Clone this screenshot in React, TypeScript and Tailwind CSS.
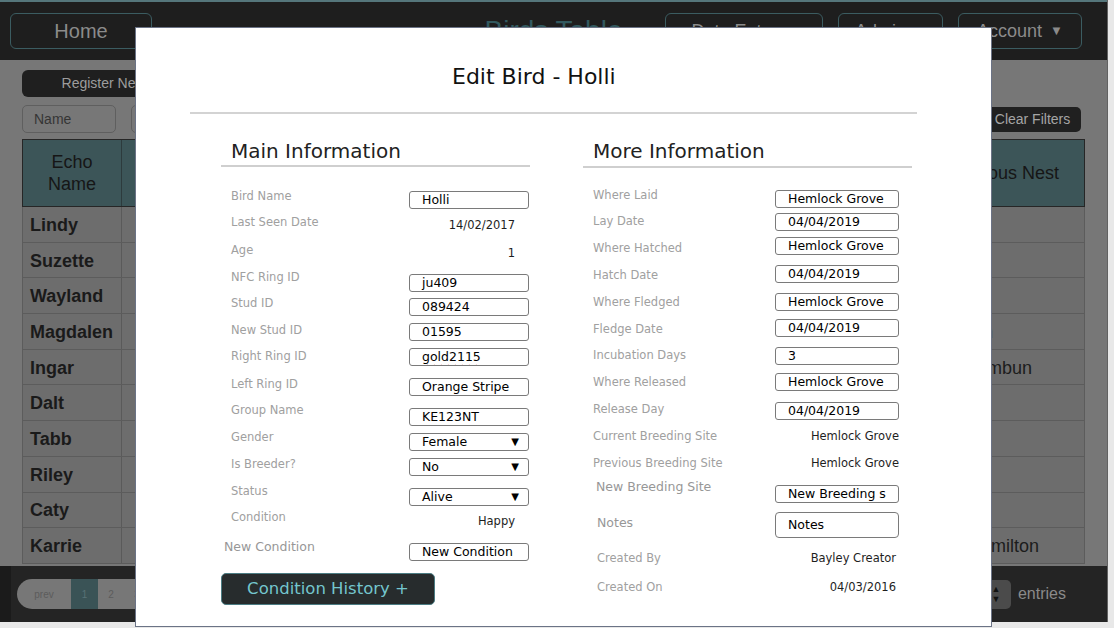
import React from 'react'

type Bird = { name: string; nest: string }

const birds: Bird[] = [
  { name: 'Lindy', nest: '' },
  { name: 'Suzette', nest: '' },
  { name: 'Wayland', nest: '' },
  { name: 'Magdalen', nest: 'Inn' },
  { name: 'Ingar', nest: 'Tombun' },
  { name: 'Dalt', nest: '' },
  { name: 'Tabb', nest: '' },
  { name: 'Riley', nest: '' },
  { name: 'Caty', nest: '' },
  { name: 'Karrie', nest: 'Hamilton' },
]

const columns = ['Echo Name', 'Band', 'Sex', 'Age', 'Status', 'Breeding Site', 'Previous Nest']

type Field = {
  label: string
  h: string
  kind: 'input' | 'select' | 'text' | 'area'
  value: string
  lm?: string
  vm?: string
  lp?: string
  tp?: string
  big?: boolean
  spell?: boolean
}

const mainFields: Field[] = [
  { label: 'Bird Name', h: 'h-[26px]', vm: 'mt-[3px]', kind: 'input', value: 'Holli' },
  { label: 'Last Seen Date', h: 'h-[28px]', vm: 'mt-[3px]', kind: 'text', value: '14/02/2017' },
  { label: 'Age', h: 'h-[27px]', vm: 'mt-[3px]', kind: 'text', value: '1' },
  { label: 'NFC Ring ID', h: 'h-[26px]', vm: 'mt-[5px]', kind: 'input', value: 'ju409' },
  { label: 'Stud ID', h: 'h-[27px]', vm: 'mt-[3px]', kind: 'input', value: '089424' },
  { label: 'New Stud ID', h: 'h-[26px]', vm: 'mt-[1px]', kind: 'input', value: '01595' },
  { label: 'Right Ring ID', h: 'h-[28px]', kind: 'input', value: 'gold2115', spell: true },
  { label: 'Left Ring ID', h: 'h-[26px]', vm: 'mt-[2px]', kind: 'input', value: 'Orange Stripe' },
  { label: 'Group Name', h: 'h-[27px]', vm: 'mt-[6px]', kind: 'input', value: 'KE123NT' },
  { label: 'Gender', h: 'h-[27px]', vm: 'mt-[4px]', kind: 'select', value: 'Female' },
  { label: 'Is Breeder?', h: 'h-[27px]', vm: 'mt-[2px]', kind: 'select', value: 'No' },
  { label: 'Status', h: 'h-[26px]', vm: 'mt-[5px]', kind: 'select', value: 'Alive' },
  { label: 'Condition', h: 'h-[30px]', vm: 'mt-[4px]', kind: 'text', value: 'Happy' },
  { label: 'New Condition', h: 'h-[34px]', vm: 'mt-[4px]', kind: 'input', value: 'New Condition', big: true, lp: 'pl-[3px]' },
]

const moreFields: Field[] = [
  { label: 'Where Laid', h: 'h-[26px]', vm: 'mt-[3px]', kind: 'input', value: 'Hemlock Grove' },
  { label: 'Lay Date', h: 'h-[24px]', kind: 'input', value: '04/04/2019' },
  { label: 'Where Hatched', h: 'h-[28px]', lm: 'mt-[3px]', kind: 'input', value: 'Hemlock Grove' },
  { label: 'Hatch Date', h: 'h-[28px]', lm: 'mt-[2px]', kind: 'input', value: '04/04/2019' },
  { label: 'Where Fledged', h: 'h-[26px]', lm: 'mt-[1px]', kind: 'input', value: 'Hemlock Grove' },
  { label: 'Fledge Date', h: 'h-[28px]', lm: 'mt-[2px]', kind: 'input', value: '04/04/2019' },
  { label: 'Incubation Days', h: 'h-[26px]', kind: 'input', value: '3' },
  { label: 'Where Released', h: 'h-[28px]', lm: 'mt-[1px]', kind: 'input', value: 'Hemlock Grove' },
  { label: 'Release Day', h: 'h-[27px]', vm: 'mt-[1px]', kind: 'input', value: '04/04/2019' },
  { label: 'Current Breeding Site', h: 'h-[27px]', kind: 'text', value: 'Hemlock Grove', tp: 'pr-0' },
  { label: 'Previous Breeding Site', h: 'h-[24px]', kind: 'text', value: 'Hemlock Grove', tp: 'pr-0' },
  { label: 'New Breeding Site', h: 'h-[33px]', vm: 'mt-[6px]', kind: 'input', value: 'New Breeding s', big: true, lp: 'pl-[13px]' },
  { label: 'Notes', h: 'h-[38px]', lm: 'mt-[3px]', kind: 'area', value: 'Notes', big: true, lp: 'pl-[14px]' },
  { label: 'Created By', h: 'h-[29px]', kind: 'text', value: 'Bayley Creator', lp: 'pl-[14px]', tp: 'pr-[3px]' },
  { label: 'Created On', h: 'h-[16px]', kind: 'text', value: '04/03/2016', lp: 'pl-[14px]', tp: 'pr-[3px]' },
]

function FieldValue({ f }: { f: Field }) {
  if (f.kind === 'text') {
    return (
      <div className={`text-right text-[11.5px] leading-[16px] text-[#1e1e1e] ${f.tp ?? 'pr-[14px]'}`}>
        {f.value}
      </div>
    )
  }
  if (f.kind === 'select') {
    return (
      <div className="flex h-[18px] items-center justify-between rounded-[3px] border border-[#7a7a7a] pl-[12px] pr-[9px] text-[12.5px] leading-[16px] text-black">
        <span>{f.value}</span>
        <span className="text-[10px]">▼</span>
      </div>
    )
  }
  if (f.kind === 'area') {
    return (
      <div className="flex h-[26px] items-center rounded-[4px] border border-[#7a7a7a] pl-[12px] text-[12.5px] text-black">
        {f.value}
      </div>
    )
  }
  return (
    <div className="h-[18px] overflow-hidden whitespace-nowrap rounded-[3px] border border-[#7a7a7a] pl-[12px] pr-[3px] text-[12.5px] leading-[16px] text-black">
      <span className={f.spell ? 'underline decoration-[#e03c3c] decoration-wavy decoration-1 underline-offset-[3px]' : ''}>
        {f.value}
      </span>
    </div>
  )
}

function FieldRow({ f, labelW, valueW }: { f: Field; labelW: string; valueW: string }) {
  return (
    <div className={`flex items-start ${f.h}`}>
      <div
        className={`${labelW} shrink-0 ${f.lm ?? ''} ${f.lp ?? 'pl-[10px]'} ${
          f.big ? 'text-[12.5px] text-[#979797]' : 'text-[11.5px] text-[#a0a0a0]'
        } leading-[16px]`}
      >
        {f.label}
      </div>
      <div className={`${valueW} ${f.vm ?? ''}`}>
        <FieldValue f={f} />
      </div>
    </div>
  )
}

function NavButton({ children, width }: { children: React.ReactNode; width: string }) {
  return (
    <button className={`flex h-[36px] ${width} items-center justify-center gap-[8px] rounded-[6px] border border-[#3b5c61] text-[18px] text-[#8b8b8b]`}>
      {children}
    </button>
  )
}

export default function App() {
  return (
    <div className="relative h-[628px] w-[1114px] overflow-hidden bg-[#e8e8e8] font-['Liberation_Sans',Arial,sans-serif]">
      <div className="flex h-[622px] w-[1108px] flex-col border-r border-[#626262] bg-[#777777]">
        {/* Top bar */}
        <header className="grid h-[60px] shrink-0 grid-cols-[1fr_auto_1fr] items-center border-t-2 border-[#55767b] bg-[#1e1e1e] px-[10px]">
          <div>
            <button className="flex h-[36px] w-[142px] items-center justify-center rounded-[6px] border border-[#3b5c61] text-[20px] text-[#8b8b8b]">
              Home
            </button>
          </div>
          <h1 className="text-[28px] leading-[32px] text-[#32595f]">Birds Table</h1>
          <nav className="flex justify-end gap-[15px] pr-[15px]">
            <NavButton width="w-[158px]">
              Data Entry <span className="text-[12px]">▼</span>
            </NavButton>
            <NavButton width="w-[105px]">
              Admin <span className="text-[12px]">▼</span>
            </NavButton>
            <NavButton width="w-[124px]">
              Account <span className="text-[13px]">▼</span>
            </NavButton>
          </nav>
        </header>

        {/* Page content */}
        <main className="flex flex-1 flex-col px-[22px] pt-[10px]">
          <div>
            <button className="h-[27px] w-[192px] rounded-[6px] bg-[#1f1f1f] text-[14px] text-[#9d9d9d]">
              Register New Bird
            </button>
          </div>

          <div className="mt-[8px] flex h-[28px] items-center justify-between pr-[4px]">
            <div className="flex gap-[15px]">
              <div className="flex h-[28px] w-[94px] items-center rounded-[5px] border border-[#5f5f5f] pl-[11px] text-[14px] text-[#353535]">
                Name
              </div>
              <div className="flex h-[28px] w-[94px] items-center rounded-[5px] border border-[#5f5f5f] pl-[11px] text-[14px] text-[#353535]">
                Band
              </div>
            </div>
            <button className="h-[25px] w-[97px] rounded-[5px] bg-[#202020] text-[14px] text-[#a5a5a5]">Clear Filters</button>
          </div>

          {/* Table */}
          <div className="mt-[6px]">
            <div className="grid h-[68px] grid-cols-[99px_150px_140px_150px_150px_1fr_162px] border border-[#262626] bg-[#3c5558]">
              {columns.map((c, i) => (
                <div
                  key={c}
                  className={`flex items-center justify-center px-[10px] text-center text-[18px] leading-[22px] text-[#161616] ${
                    i < columns.length - 1 ? 'border-r border-[#2d3b3d]' : ''
                  }`}
                >
                  {c === 'Echo Name' ? (
                    <span>
                      Echo
                      <br />
                      Name
                    </span>
                  ) : (
                    c
                  )}
                </div>
              ))}
            </div>
            {birds.map((b) => (
              <div
                key={b.name}
                className="grid h-[35.7px] grid-cols-[99px_150px_140px_150px_150px_1fr_162px] border-x border-b border-[#5c5c5c] bg-[#6d6d6d]"
              >
                <div className="flex items-center border-r border-[#5a5a5a] pl-[7px] pt-[2px] text-[18px] font-bold text-[#1a1a1a]">{b.name}</div>
                <div className="border-r border-[#636363]" />
                <div className="border-r border-[#636363]" />
                <div className="border-r border-[#636363]" />
                <div className="border-r border-[#636363]" />
                <div className="border-r border-[#636363]" />
                <div className="flex items-center pl-[46px] pt-[2px] text-[18px] text-[#1c1c1c]">{b.nest}</div>
              </div>
            ))}
          </div>
        </main>

        {/* Footer */}
        <footer className="flex h-[56px] shrink-0 items-center justify-between border-l-[11px] border-[#1b1b1b] bg-[#242424] pl-[6px] pr-[41px]">
          <div className="flex h-[30px] overflow-hidden rounded-l-full bg-[#777777] text-[10px] text-[#5c5c5c]">
            <span className="flex w-[54px] items-center justify-center">prev</span>
            <span className="flex w-[27px] items-center justify-center bg-[#3a5356] text-[#587175]">1</span>
            <span className="flex w-[26px] items-center justify-center">2</span>
            <span className="flex w-[26px] items-center justify-center">3</span>
            <span className="flex w-[26px] items-center justify-center">next</span>
          </div>
          <div className="flex items-center gap-[7px]">
            <div className="flex h-[29px] w-[30px] flex-col items-center justify-center rounded-[5px] bg-[#4b4b4b] text-[9px] leading-[10px] text-[#111111]">
              <span>▲</span>
              <span>▼</span>
            </div>
            <span className="text-[16px] text-[#8a8a8a]">entries</span>
          </div>
        </footer>
      </div>

      {/* Edit modal */}
      <div className="absolute left-[135px] top-[27px] h-[600px] w-[857px] border border-[#6b7386] bg-white font-['DejaVu_Sans',Verdana,sans-serif]">
        <h2 className="pl-[316px] pt-[35px] text-[22px] leading-[28px] text-[#111111]">Edit Bird - Holli</h2>
        <div className="ml-[54px] mt-[21px] h-[2px] w-[727px] bg-[#d3d3d3]" />

        <div className="flex gap-[53px] pl-[85px] pt-[25px]">
          {/* Main information */}
          <section className="w-[309px]">
            <h3 className="pl-[10px] text-[20px] leading-[24px] text-[#222222]">Main Information</h3>
            <div className="mt-[2px] h-[2px] bg-[#cfcfcf]" />
            <div className="mt-[21px]">
              {mainFields.map((f) => (
                <FieldRow key={f.label} f={f} labelW="w-[188px]" valueW="w-[120px]" />
              ))}
            </div>
            <button className="h-[32px] w-[214px] rounded-[5px] border border-[#4b7c83] bg-[#272c2d] text-[16.5px] text-[#74c6ce]">
              Condition History +
            </button>
          </section>

          {/* More information */}
          <section className="w-[329px]">
            <h3 className="pl-[10px] text-[20px] leading-[24px] text-[#222222]">More Information</h3>
            <div className="mt-[3px] h-[2px] bg-[#cfcfcf]" />
            <div className="mt-[19px]">
              {moreFields.map((f) => (
                <FieldRow key={f.label} f={f} labelW="w-[192px]" valueW="w-[124px]" />
              ))}
            </div>
          </section>
        </div>
      </div>
    </div>
  )
}
